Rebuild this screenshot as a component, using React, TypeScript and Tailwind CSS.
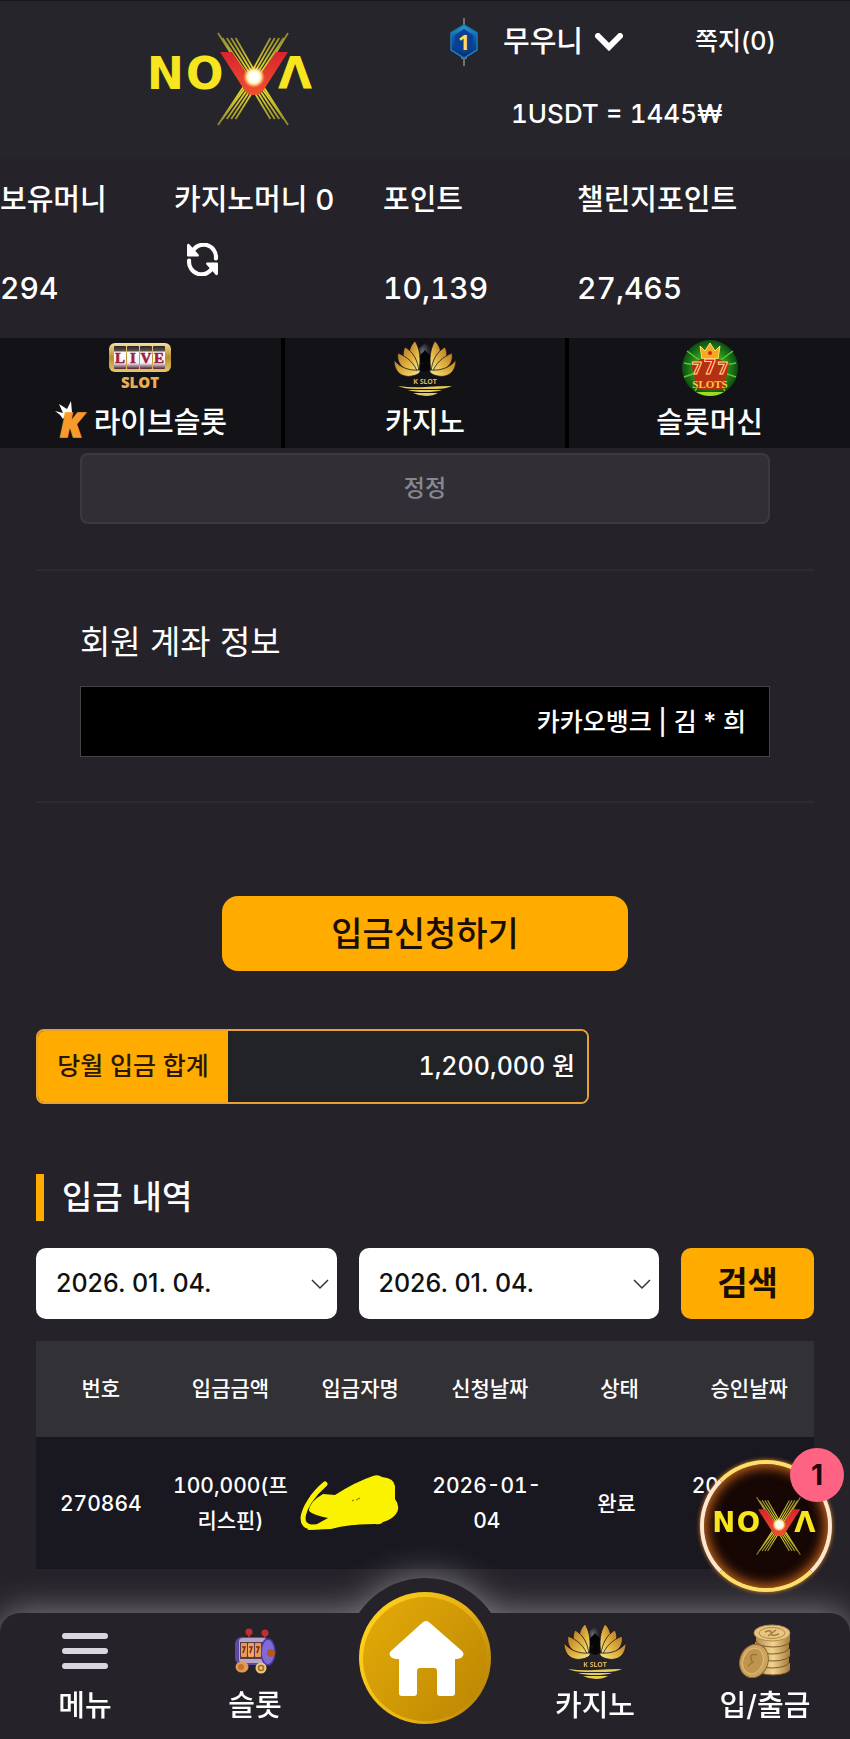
import { ReactNode } from 'react';

interface Deposit {
    id: string;
    amount: string[];
    requestedAt: string[];
    status: string;
    approvedAt: string[];
}

const deposits: Deposit[] = [
    {
        id: '270864',
        amount: ['100,000(프', '리스핀)'],
        requestedAt: ['2026-01-', '04'],
        status: '완료',
        approvedAt: ['2026-01-', '04'],
    },
];

const columns = ['번호', '입금금액', '입금자명', '신청날짜', '상태', '승인날짜'];

const rays = [0, 1, 2, 3, 4];

const NovaLogo = ({ id, className }: { id: string; className: string }) => (
    <svg viewBox="0 0 172 96" className={className} role="img" aria-label="NOVA">
        <defs>
            <linearGradient id={`${id}-ray`} gradientUnits="userSpaceOnUse" x1="0" y1="2" x2="0" y2="94">
                <stop offset="0" stopColor="#8a8530" />
                <stop offset="0.4" stopColor="#e6d928" />
                <stop offset="0.65" stopColor="#e6d928" />
                <stop offset="1" stopColor="#8a8530" />
            </linearGradient>
            <radialGradient id={`${id}-glow`}>
                <stop offset="0.4" stopColor="#ffffff" />
                <stop offset="0.65" stopColor="#ffe9a8" />
                <stop offset="1" stopColor="#ffb347" stopOpacity="0" />
            </radialGradient>
            <linearGradient id={`${id}-v`} x1="0" y1="0" x2="0" y2="1">
                <stop offset="0" stopColor="#d8232f" />
                <stop offset="1" stopColor="#f0512c" />
            </linearGradient>
        </defs>
        <g stroke={`url(#${id}-ray)`} strokeWidth="1.8">
            {rays.map(i => (
                <g key={i}>
                    <line x1={71 + i * 4.4} y1={i === 0 ? 2 : 7} x2={99 + i * 3} y2="46" />
                    <line x1={141 - i * 4.4} y1={i === 0 ? 2 : 7} x2={114 - i * 3} y2="46" />
                    <line x1={71 + i * 4.4} y1={i === 0 ? 94 : 88} x2={99 + i * 3} y2="52" />
                    <line x1={141 - i * 4.4} y1={i === 0 ? 94 : 88} x2={114 - i * 3} y2="52" />
                </g>
            ))}
        </g>
        <g fill="#f6e51f" fontFamily="DejaVu Sans, sans-serif" fontSize="44" fontWeight="700">
            <text x="0" y="58">N</text>
            <text x="39" y="58">O</text>
            <text x="131" y="58">Λ</text>
        </g>
        <path d="M73 21h12l20 29h4l20-29h12l-25 39q-3 4-8 4h-2q-5 0-8-4z" fill={`url(#${id}-v)`} />
        <circle cx="107" cy="46" r="11" fill={`url(#${id}-glow)`} />
    </svg>
);

const LotusIcon = ({ id }: { id: string }) => (
    <svg viewBox="0 0 62 56" className="h-[56px] w-[62px]" aria-hidden="true">
        <defs>
            <linearGradient id={`${id}-gold`} x1="0" y1="0" x2="1" y2="1">
                <stop offset="0" stopColor="#b87a26" />
                <stop offset="0.55" stopColor="#e3b542" />
                <stop offset="1" stopColor="#f8ef95" />
            </linearGradient>
            <radialGradient id={`${id}-dark`} cx="0.4" cy="0.3">
                <stop offset="0" stopColor="#6c6c76" />
                <stop offset="0.5" stopColor="#2b2b32" />
                <stop offset="1" stopColor="#08080a" />
            </radialGradient>
        </defs>
        <path d="M31 3c6 5 10 10 10 16 0 7-5 12-10 13-5-1-10-6-10-13 0-6 4-11 10-16z" fill={`url(#${id}-dark)`} />
        <path d="M31 10c3 4 7 6 7 10 0 3-4 4-6 2l2 5h-6l2-5c-2 2-6 1-6-2 0-4 4-6 7-10z" fill="#050507" />
        {['', 'matrix(-1 0 0 1 62 0)'].map(flip => (
            <g key={flip} transform={flip || undefined} fill={`url(#${id}-gold)`} stroke="#17151a" strokeWidth="0.8">
                <path d="M21 1C12 10 14 21 25 31 27 19 26 9 21 1z" />
                <path d="M11 7C6 17 12 27 25 32 24 20 19 12 11 7z" />
                <path d="M4 13C2 23 9 31 24 34 21 23 13 17 4 13z" />
                <path d="M0 20C0 32 8 38 18 36 24 35 27 32 26 30 14 31 6 27 0 20z" />
            </g>
        ))}
        <text x="31" y="44" textAnchor="middle" fontSize="7" fontWeight="700" fill="#d8b45a" fontFamily="Noto Sans, sans-serif">K SLOT</text>
        <path d="M4 46q14 2 27 1t27-1q-6 3-16 3H22Q10 49 4 46zM14 50h34q-6 2-17 2t-17-2zM19 53h25q-5 3-12 3t-13-3z" fill="#e4cc55" />
    </svg>
);

const LiveSlotIcon = () => (
    <svg viewBox="0 0 64 52" className="h-[52px] w-[64px]" aria-hidden="true">
        <defs>
            <linearGradient id="live-frame" x1="0" y1="0" x2="0" y2="1">
                <stop offset="0" stopColor="#f5e2a0" />
                <stop offset="0.5" stopColor="#b98b2f" />
                <stop offset="1" stopColor="#e8c963" />
            </linearGradient>
            <linearGradient id="live-reel" x1="0" y1="0" x2="0" y2="1">
                <stop offset="0" stopColor="#2c2622" />
                <stop offset="0.2" stopColor="#5a5048" />
                <stop offset="0.28" stopColor="#ffffff" />
                <stop offset="0.74" stopColor="#f3eef4" />
                <stop offset="1" stopColor="#4c2030" />
            </linearGradient>
        </defs>
        <rect x="1" y="1" width="62" height="29" rx="6" fill="url(#live-frame)" />
        {['L', 'I', 'V', 'E'].map((letter, i) => (
            <g key={letter}>
                <rect x={6 + i * 13} y="4" width="12" height="23" rx="1" fill="url(#live-reel)" />
                <text x={12 + i * 13} y="21" textAnchor="middle" fontSize="15" fontWeight="700" fill="#9c2238" stroke="#9c2238" strokeWidth="0.6" fontFamily="Liberation Serif, serif">{letter}</text>
            </g>
        ))}
        <text x="32" y="46" textAnchor="middle" fontSize="15" fontWeight="800" fill="#edae52" fontFamily="Open Sans, sans-serif">SLOT</text>
    </svg>
);

const CrownK = () => (
    <svg viewBox="0 0 36 50" className="h-[50px] w-[36px]" aria-hidden="true">
        <path d="M1 13l8 2-4-9 8 5 4-8 1 12-6 2-3 4q-3-5-8-8z" fill="#ffffff" />
        <text x="6" y="39" fontSize="34" fontWeight="800" fontStyle="italic" fill="#f79a2b" stroke="#f79a2b" strokeWidth="1.5" fontFamily="Open Sans, sans-serif">K</text>
    </svg>
);

const SevensIcon = () => (
    <svg viewBox="0 0 58 58" className="h-[58px] w-[58px]" aria-hidden="true">
        <defs>
            <radialGradient id="sevens-bg">
                <stop offset="0" stopColor="#b8f02a" />
                <stop offset="0.55" stopColor="#2f9a1c" />
                <stop offset="1" stopColor="#0b4d12" />
            </radialGradient>
        </defs>
        <circle cx="29" cy="29" r="28" fill="url(#sevens-bg)" />
        <path d="M29 29L6 12M29 29L3 24M29 29L3 38M29 29L14 52M29 29L52 12M29 29L55 24M29 29L55 38M29 29L44 52" stroke="#5fc434" strokeWidth="1.5" />
        <path d="M21 20L19 7l5 5 5-8 5 8 5-5-2 13z" fill="#f7a823" stroke="#ffe168" strokeWidth="1" />
        <circle cx="29" cy="14" r="2" fill="#d8261c" />
        <path d="M10 25l10-5h18l10 5-5 25H16z" fill="#b33112" />
        <g fill="#e0141c" stroke="#ffe08a" strokeWidth="1" fontFamily="Roboto, sans-serif" fontWeight="900" textAnchor="middle">
            <text x="16" y="35" fontSize="17">7</text>
            <text x="42" y="35" fontSize="17">7</text>
            <text x="29" y="35" fontSize="20">7</text>
        </g>
        <text x="29" y="49" textAnchor="middle" fontSize="11" fontWeight="700" fill="#ffc93c" fontFamily="Liberation Serif, serif">SLOTS</text>
        <path d="M15 53h28q-6 4-14 4t-14-4z" fill="#9ddb22" />
    </svg>
);

const LevelBadge = () => (
    <svg viewBox="0 0 30 50" className="h-[50px] w-[30px]" aria-hidden="true">
        <defs>
            <linearGradient id="level-blue" x1="0" y1="0" x2="0" y2="1">
                <stop offset="0" stopColor="#27a3d6" />
                <stop offset="0.4" stopColor="#1059a8" />
                <stop offset="1" stopColor="#06256b" />
            </linearGradient>
        </defs>
        <path d="M15 1v8M15 41v8M12 41h6" stroke="#8d8d84" strokeWidth="1.5" />
        <path d="M15 8l13 8v17l-13 8-13-8V16z" fill="url(#level-blue)" stroke="#1b7bb8" strokeWidth="1.5" />
        <path d="M15 12l9 6v13l-9 6-9-6V18z" fill="#0a3f93" />
        <text x="15" y="33" textAnchor="middle" fontSize="21" fontWeight="700" fill="#ffdf4d" fontFamily="Open Sans, sans-serif">1</text>
    </svg>
);

const RefreshIcon = () => (
    <svg viewBox="0 0 32 32" className="h-[33px] w-[33px]" aria-hidden="true">
        <path d="M6 9a12 12 0 0 1 23 6M26 23A12 12 0 0 1 3 17" fill="none" stroke="#fff" strokeWidth="4" strokeLinecap="round" />
        <path d="M1 2v10q0 1 1 1h10q1-1 0-2L3 1q-1-1-2 1zM31 30V20q0-1-1-1H20q-1 1 0 2l9 10q1 1 2-1z" fill="#fff" />
    </svg>
);

const SlotMachineIcon = () => (
    <svg viewBox="0 0 42 46" className="h-[46px] w-[42px]" aria-hidden="true">
        <path d="M15 4v8M31 5v8" stroke="#a44b43" strokeWidth="1.5" />
        <circle cx="15" cy="4" r="3.5" fill="#c22c35" />
        <circle cx="31" cy="5" r="3.5" fill="#c22c35" />
        <rect x="1" y="9" width="34" height="28" rx="7" fill="#5c49a6" />
        <rect x="5" y="10" width="28" height="25" rx="4" fill="#b5a3c8" />
        <path d="M6 14h26v17H6z" fill="#5b3a4c" />
        <ellipse cx="34" cy="24" rx="7" ry="13" fill="#8069d8" stroke="#4b37a0" strokeWidth="1.5" />
        <circle cx="37" cy="25" r="4" fill="#b05a22" />
        <rect x="7" y="15" width="6" height="14" rx="1" fill="#e79a52" />
        <rect x="14" y="15" width="6" height="14" rx="1" fill="#f0a75c" />
        <rect x="21" y="15" width="6" height="14" rx="1" fill="#e79a52" />
        <path d="M8 19h3l-2 6M15 19h3l-2 6M22 19h3l-2 6" fill="none" stroke="#7c2b28" strokeWidth="1.5" />
        <ellipse cx="8" cy="39" rx="6.5" ry="5.5" fill="#e29a4f" />
        <ellipse cx="7" cy="39" rx="3" ry="3" fill="#c4722d" />
        <circle cx="27" cy="40" r="5.5" fill="#e8c777" />
        <circle cx="27" cy="40" r="2.5" fill="none" stroke="#9b6b2e" strokeWidth="1.5" />
    </svg>
);

const CoinsIcon = () => (
    <svg viewBox="0 0 54 54" className="h-[54px] w-[54px]" aria-hidden="true">
        <defs>
            <linearGradient id="coin-edge" x1="0" y1="0" x2="1" y2="0">
                <stop offset="0" stopColor="#b58a4c" />
                <stop offset="0.5" stopColor="#f1d592" />
                <stop offset="1" stopColor="#a87b3d" />
            </linearGradient>
        </defs>
        {[42, 35, 28, 21, 14].map((y, i) => (
            <g key={y}>
                <path d={`M${18 - (i % 2)} ${y - 3}v6a17 6 0 0 0 34 0v-6z`} fill="url(#coin-edge)" />
                <path d={`M${18 - (i % 2)} ${y + 3}a17 6 0 0 0 34 0`} fill="none" stroke="#7d5728" strokeWidth="1" />
            </g>
        ))}
        <ellipse cx="34" cy="9" rx="18" ry="8" fill="#e6c681" stroke="#b58c4c" />
        <ellipse cx="34" cy="9" rx="13" ry="5.5" fill="none" stroke="#b58c4c" />
        <path d="M27 8q7-3 6 1t8 1M30 12l8-6" fill="none" stroke="#a67c3e" strokeWidth="1.5" />
        <ellipse cx="16" cy="37" rx="14" ry="17" transform="rotate(20 16 37)" fill="#cda45f" stroke="#8f6832" />
        <ellipse cx="15" cy="37" rx="10" ry="13" transform="rotate(20 15 37)" fill="#c0934e" stroke="#e0bd78" />
        <path d="M19 31q-7-2-6 3t2 4-5 4" fill="none" stroke="#9d7539" strokeWidth="1.5" />
    </svg>
);

const MenuIcon = () => (
    <svg viewBox="0 0 46 38" className="h-[38px] w-[46px]" aria-hidden="true">
        <path d="M3 4h40M3 19h40M3 34h40" stroke="#d9d6df" strokeWidth="6" strokeLinecap="round" />
    </svg>
);

const HomeIcon = () => (
    <svg viewBox="0 0 132 132" className="h-[132px] w-[132px]" aria-hidden="true">
        <defs>
            <linearGradient id="home-gold" x1="0.1" y1="0.2" x2="0.9" y2="0.8">
                <stop offset="0" stopColor="#e0a608" />
                <stop offset="0.5" stopColor="#d09905" />
                <stop offset="1" stopColor="#c08a04" />
            </linearGradient>
            <linearGradient id="home-rim" x1="0" y1="0.3" x2="1" y2="0.8">
                <stop offset="0" stopColor="#ffd21c" />
                <stop offset="0.6" stopColor="#e6b012" />
                <stop offset="1" stopColor="#b58207" />
            </linearGradient>
        </defs>
        <circle cx="66" cy="66" r="66" fill="url(#home-rim)" />
        <circle cx="66" cy="67" r="62" fill="url(#home-gold)" />
        <path d="M63 31q4-4 8 0l32 28q3 3 0 6-2 2-7 2v34q0 3-3 3H81q-3 0-3-3V79q0-3-3-3H61q-3 0-3 3v22q0 3-3 3H43q-3 0-3-3V67q-6 0-8-2-3-3 0-6z" fill="#ffffff" />
    </svg>
);

const CategoryTab = ({ icon, children }: { icon: ReactNode; children: ReactNode }) => (
    <a href="#" className="flex h-[110px] flex-1 flex-col items-center bg-[#131216]">
        <span className="flex h-[60px] items-center">{icon}</span>
        <span className="flex h-[50px] items-center gap-1 text-[29px]">{children}</span>
    </a>
);

const NavItem = ({ icon, label }: { icon: ReactNode; label: string }) => (
    <a href="#" className="flex flex-1 flex-col items-center pt-2">
        <span className="flex h-[60px] items-center">{icon}</span>
        <span className="text-[29px] leading-[50px]">{label}</span>
    </a>
);

const DateSelect = ({ label }: { label: string }) => (
    <div className="relative flex-1">
        <select aria-label={label} className="h-[71px] w-full appearance-none rounded-[10px] bg-white px-5 text-[25px] text-[#111]">
            <option>2026. 01. 04.</option>
        </select>
        <svg viewBox="0 0 18 11" className="pointer-events-none absolute right-2 top-[31px] h-[11px] w-[18px]" aria-hidden="true">
            <path d="M1 1l8 8 8-8" fill="none" stroke="#333" strokeWidth="1.5" />
        </svg>
    </div>
);

const Lines = ({ lines }: { lines: string[] }) => (
    <>
        {lines.map(line => (
            <span key={line} className="block whitespace-nowrap">{line}</span>
        ))}
    </>
);

const App = () => {
    return (
        <div className="min-h-screen bg-[#252329] font-[Inter,'Noto_Sans_CJK_KR',sans-serif] font-medium text-white">
            <header className="grid h-[158px] grid-cols-[449fr_401fr] border-t border-[#17161b] bg-[#26252c]">
                <a href="#" className="flex justify-center pl-4 pt-[30px]">
                    <NovaLogo id="top" className="h-[96px] w-[172px]" />
                </a>
                <div className="pt-4">
                    <div className="flex items-center">
                        <LevelBadge />
                        <button type="button" className="ml-6 flex items-center gap-3 text-[29px] leading-[50px]">
                            무우니
                            <svg viewBox="0 0 28 18" className="h-[18px] w-[28px]" aria-hidden="true">
                                <path d="M3 3l11 11L25 3" fill="none" stroke="#fff" strokeWidth="6" strokeLinecap="round" />
                            </svg>
                        </button>
                        <a href="#" className="ml-[72px] text-[25px]">쪽지(0)</a>
                    </div>
                    <p className="ml-[62px] mt-6 text-[26px] leading-[46px] tabular-nums">1USDT = 1445₩</p>
                </div>
            </header>

            <dl className="grid h-[180px] grid-cols-[174fr_209fr_194fr_273fr] pt-5 text-[29px] leading-[44px]">
                <div className="flex flex-col gap-11">
                    <dt>보유머니</dt>
                    <dd className="text-[30px] tabular-nums">294</dd>
                </div>
                <div>
                    <div className="flex gap-2">
                        <dt>카지노머니</dt>
                        <dd>0</dd>
                    </div>
                    <button type="button" aria-label="새로고침" className="ml-3 mt-[21px] block">
                        <RefreshIcon />
                    </button>
                </div>
                <div className="flex flex-col gap-11">
                    <dt>포인트</dt>
                    <dd className="text-[30px] tabular-nums">10,139</dd>
                </div>
                <div className="flex flex-col gap-11">
                    <dt>챌린지포인트</dt>
                    <dd className="text-[30px] tabular-nums">27,465</dd>
                </div>
            </dl>

            <nav className="flex gap-1 bg-black">
                <CategoryTab icon={<LiveSlotIcon />}>
                    <CrownK />
                    라이브슬롯
                </CategoryTab>
                <CategoryTab icon={<LotusIcon id="tab-lotus" />}>카지노</CategoryTab>
                <CategoryTab icon={<SevensIcon />}>슬롯머신</CategoryTab>
            </nav>

            <main className="px-9 pb-[170px] pt-[5px]">
                <div className="border-b-2 border-[#2c2b31] px-11 pb-[45px]">
                    <button type="button" className="h-[71px] w-full rounded-lg border-2 border-[#3b3a40] bg-[#312f35] text-[23px] text-[#85888e]">
                        정정
                    </button>
                </div>

                <section className="border-b-2 border-[#2c2b31] px-11 pb-[44px] pt-[46px]">
                    <label htmlFor="account" className="block text-[33px] font-normal leading-[50px]">회원 계좌 정보</label>
                    <input
                        id="account"
                        readOnly
                        value="카카오뱅크 | 김 * 희"
                        className="mt-[19px] h-[71px] w-full border border-[#45444a] bg-black px-[23px] pb-1 text-right text-[25px]"
                    />
                </section>

                <button type="button" className="mx-auto mt-[93px] block h-[75px] w-[406px] rounded-[16px] bg-[#ffab00] text-[34px] text-[#1a0d05]">
                    입금신청하기
                </button>

                <div className="mt-[58px] flex h-[75px] w-[553px] items-stretch overflow-hidden rounded-lg border-2 border-[#e5a133] text-[25px] leading-[71px]">
                    <span className="w-[190px] bg-[#ffab00] text-center text-[#2a1606]">당월 입금 합계</span>
                    <span className="flex-1 bg-[#222327] pr-3 text-right tabular-nums">1,200,000 원</span>
                </div>

                <h2 className="mt-[70px] border-l-[8px] border-[#ffab00] pl-[18px] text-[33px] leading-[47px]">입금 내역</h2>

                <form className="mt-[27px] flex gap-[22px]">
                    <DateSelect label="시작일" />
                    <DateSelect label="종료일" />
                    <button type="button" className="h-[71px] w-[133px] rounded-[10px] bg-[#ffab00] text-[33px] font-bold text-[#1a0d05]">검색</button>
                </form>

                <table className="mt-[22px] w-full table-fixed text-center text-[21px]">
                    <thead>
                        <tr className="h-[96px] bg-[#313136]">
                            {columns.map(column => (
                                <th key={column} scope="col" className="font-medium">{column}</th>
                            ))}
                        </tr>
                    </thead>
                    <tbody>
                        {deposits.map(deposit => (
                            <tr key={deposit.id} className="h-[132px] bg-[#19171f] leading-[35px] tabular-nums">
                                <td>{deposit.id}</td>
                                <td><Lines lines={deposit.amount} /></td>
                                <td>
                                    {/* depositor name is hidden behind a marker scribble */}
                                    <svg viewBox="0 0 100 58" className="ml-1 h-[58px] w-[100px]" role="img" aria-label="비공개">
                                        <path d="M26 10C14 20 5 34 4 44q0 8 8 9 20 0 34-5" fill="none" stroke="#fbf200" strokeWidth="5" strokeLinecap="round" />
                                        <path d="M36 21Q56 8 74 2q5-2 9 1 12 1 13 9v13q6 8 1 15-5 6-13 8-2 3-8 2-26 0-44 5l-24 1q10-6 21-12-15-3-19-7 0-9 14-17z" fill="#fbf200" />
                                        <path d="M53 27l2-1M57 26l4-2" stroke="#6f6b15" strokeWidth="1" />
                                    </svg>
                                </td>
                                <td className="pr-1.5"><Lines lines={deposit.requestedAt} /></td>
                                <td className="pr-1.5">{deposit.status}</td>
                                <td className="pr-1.5"><Lines lines={deposit.approvedAt} /></td>
                            </tr>
                        ))}
                    </tbody>
                </table>
            </main>

            <nav className="fixed inset-x-0 bottom-0 h-[126px]">
                <div className="absolute inset-0 drop-shadow-[0_0_18px_rgba(255,255,255,0.45)]">
                    <div className="absolute inset-0 rounded-t-[20px] bg-[#252329]" />
                    <div className="absolute left-1/2 top-[-35px] h-[160px] w-[160px] -translate-x-1/2 rounded-full bg-[#252329]" />
                </div>
                <div className="relative flex h-full">
                    <NavItem icon={<MenuIcon />} label="메뉴" />
                    <NavItem icon={<SlotMachineIcon />} label="슬롯" />
                    <a href="#" aria-label="홈" className="-mt-[21px] flex flex-1 justify-center">
                        <HomeIcon />
                    </a>
                    <NavItem icon={<LotusIcon id="nav-lotus" />} label="카지노" />
                    <NavItem icon={<CoinsIcon />} label="입/출금" />
                </div>
            </nav>

            <button
                type="button"
                className="fixed bottom-[147px] right-[18px] flex h-[132px] w-[132px] items-center justify-center rounded-full border-[4px] border-y-[#ffdf6a] border-x-[#ffe6d0] bg-[#160704] shadow-[0_0_4px_#e08a2a,inset_0_0_12px_3px_#c8661c]"
            >
                <NovaLogo id="float" className="h-[60px] w-[108px] shrink-0" />
                <span className="absolute -right-[16px] -top-[16px] flex h-[54px] w-[54px] items-center justify-center rounded-full bg-[#ff6384] text-[28px] font-bold text-[#1a0a10]">
                    1
                </span>
            </button>
        </div>
    );
};

export default App;
